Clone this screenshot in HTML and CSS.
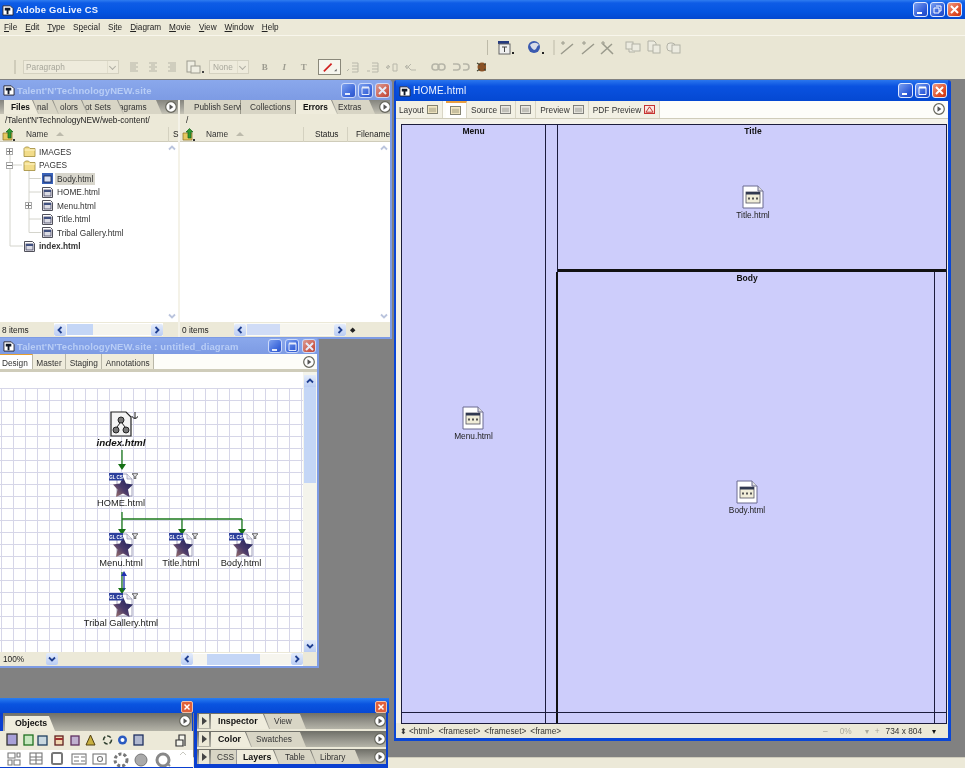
FILE: index.html
```html
<!DOCTYPE html>
<html lang="en">
<head>
<meta charset="utf-8">
<title>Adobe GoLive CS</title>
<link rel="stylesheet" href="styles.css">
</head>
<body>
<svg class="sprite" width="0" height="0">
  <defs>
    <linearGradient id="stargrad" x1="1" y1="0" x2="0" y2="1"><stop offset="0" stop-color="#141c58"/><stop offset=".55" stop-color="#4a3a6a"/><stop offset="1" stop-color="#a87868"/></linearGradient>
    <symbol id="folder" viewBox="0 0 13 11"><path d="M1 2.500 2.500 1h3L7 2.500h5v8H1z" fill="#f2dc8a" stroke="#a08a3a" stroke-width=".8"/><path d="M1.500 4h10.500" stroke="#fff6c8" stroke-width="1"/></symbol>
    <symbol id="doc" viewBox="0 0 11 11"><path d="M.5.5h8l2 2v8H.5z" fill="#fff" stroke="#50505a"/><rect x="2" y="3" width="7" height="6" fill="#dcdce4" stroke="#404060" stroke-width=".8"/><rect x="2" y="3" width="7" height="2" fill="#405080"/></symbol>
    <symbol id="docsel" viewBox="0 0 11 11"><rect width="11" height="11" fill="#3a62b8"/><rect x="2" y="3" width="7" height="6" fill="#d8e0f4" stroke="#102050" stroke-width=".8"/></symbol>
    <symbol id="upfolder" viewBox="0 0 13 13"><path d="M1 5h9v7H1z" fill="#e6c860" stroke="#8a7020" stroke-width=".7"/><path d="M6 10V4H4l3.500-3.500L11 4H9v6z" fill="#2f9a30" stroke="#14601a" stroke-width=".7"/><rect x="11" y="11" width="2" height="2" fill="#333"/></symbol>
    <symbol id="glpage" viewBox="0 0 24 24"><path d="M8 1h10l5 5v17H8z" fill="#fff" stroke="#8888a8" stroke-width=".8"/><path d="M18 1v5h5" fill="#e8e8f0" stroke="#8888a8" stroke-width=".6"/><path d="M14 4 17 10.500 24 11.500 19 16.500 20.500 24 14 20.500 7 24 8.500 16.500 4 11.500 11 10.500z" fill="url(#stargrad)"/><rect y="0" width="14" height="7.500" fill="#2c3f9c"/><text x="7" y="5.800" class="gl-text" text-anchor="middle">GL CS</text></symbol>
    <symbol id="ftp" viewBox="0 0 8 8"><path d="M0 1h8L5 4v4H3V4z" fill="none" stroke="#333" stroke-width="1"/></symbol>
    <symbol id="framedoc" viewBox="0 0 22 24"><path d="M1 1h15l5 5v17H1z" fill="#fff" stroke="#6a6a90"/><path d="M16 1v5h5" fill="#ddd" stroke="#6a6a90"/><rect x="4" y="7" width="14" height="11" fill="#f0edd8" stroke="#505060" stroke-width=".8"/><rect x="4" y="7" width="14" height="2.500" fill="#303850"/><path d="M6 13.500h2M10 13.500h2M14 13.500h2" stroke="#555" stroke-width="2"/></symbol>
    <symbol id="circ" viewBox="0 0 12 12"><circle cx="6" cy="6" r="5.300" fill="#fff" stroke="#66665c" stroke-width="1.200"/><path d="M4.500 3.300 8.300 6 4.500 8.700z" fill="#555"/></symbol>
    <symbol id="ch-l" viewBox="0 0 12 12"><path d="M7.500 3 4.500 6l3 3" fill="none" stroke="#1f3f90" stroke-width="1.800"/></symbol>
    <symbol id="ch-r" viewBox="0 0 12 12"><path d="M4.500 3l3 3-3 3" fill="none" stroke="#1f3f90" stroke-width="1.800"/></symbol>
    <symbol id="ch-u" viewBox="0 0 12 12"><path d="M3 7.500 6 4.500l3 3" fill="none" stroke="#1f3f90" stroke-width="1.800"/></symbol>
    <symbol id="ch-d" viewBox="0 0 12 12"><path d="M3 4.500 6 7.500l3-3" fill="none" stroke="#1f3f90" stroke-width="1.800"/></symbol>
    <symbol id="appicon" viewBox="0 0 13 13"><path d="M1 2h8l3 3v7H1z" fill="#fff" stroke="#223"/><path d="M3 4h6v3H3zM5 7h2v4H5z" fill="#101828"/></symbol>
    <symbol id="tabpic" viewBox="0 0 12 10"><rect x=".5" y=".5" width="11" height="9" fill="#f4e8c4" stroke="#776"/><rect x="2" y="3" width="8" height="5" fill="#c8c0a0"/></symbol>
  </defs>
</svg>

<div class="app">
  <header class="app-title">
    <svg class="ttl-ico"><use href="#appicon"/></svg>
    <span class="app-name">Adobe GoLive CS</span>
    <div class="wctl wctl-app">
      <span class="wbtn"><svg viewBox="0 0 13 13"><rect x="3" y="9" width="5" height="2" fill="#fff"/></svg></span>
      <span class="wbtn"><svg viewBox="0 0 13 13"><path d="M5 3h5v5H8M3 5h5v5H3z" fill="none" stroke="#fff"/></svg></span>
      <span class="wbtn wbtn-x"><svg viewBox="0 0 13 13"><path d="M3 3l7 7M10 3l-7 7" stroke="#fff" stroke-width="2"/></svg></span>
    </div>
  </header>
  <nav class="menubar">
    <span><u>F</u>ile</span><span><u>E</u>dit</span><span><u>T</u>ype</span><span>S<u>p</u>ecial</span><span>S<u>i</u>te</span><span><u>D</u>iagram</span><span><u>M</u>ovie</span><span><u>V</u>iew</span><span><u>W</u>indow</span><span><u>H</u>elp</span>
  </nav>
  <div class="toolbar">
    <div class="tb-row tb-row1">
      <i class="tb-sep"></i>
      <svg class="strip1" viewBox="0 0 195 16" width="195" height="16">
        <g transform="translate(9 0)"><rect x="1" y="1" width="11" height="3" fill="#243a80"/><rect x="2" y="4" width="11" height="10" fill="#f0f0f0" stroke="#666"/><path d="M5 7h5M7.500 7v5" stroke="#444"/><rect x="15" y="12" width="2" height="2" fill="#222"/></g>
        <g transform="translate(39 0)"><circle cx="7" cy="7" r="6" fill="#3a5ab0"/><path d="M3 5c3-3 7-3 9 0-3 1-2 5-5 5-2-1-3-3-4-5z" fill="#d8dce8"/><rect x="15" y="12" width="2" height="2" fill="#222"/></g>
        <path d="M66 0v15" stroke="#bdbaa8"/>
        <g stroke="#9a9a8c" fill="none" stroke-width="1.500"><path d="M73 14 85 4M94 14 106 4M113 14 124 4M115 4l10 10"/><path d="M73 3h4M75 1v4M94 3h4M96 1v4M113 3h4M115 1v4" stroke-width="1"/></g>
        <g stroke="#b2b2a6" fill="#ecebe0"><rect x="138" y="2" width="7" height="7"/><rect x="144" y="4" width="8" height="7"/><path d="M141 9v3h6"/><path d="M160 1h6l2 2v8h-8z"/><rect x="165" y="5" width="7" height="8"/><rect x="179" y="3" width="8" height="8" rx="3"/><rect x="184" y="5" width="8" height="8"/></g>
      </svg>
    </div>
    <div class="tb-row tb-row2">
      <i class="tb-handle"></i>
      <span class="sel sel-para">Paragraph<b class="sel-ar"></b></span>
      <svg class="strip2" viewBox="0 0 90 16" width="90" height="16">
        <g stroke="#b6b5a8"><path d="M11 4h8M11 6h6M11 8h8M11 10h6M11 12h8"/><path d="M30 4h8M32 6h4M30 8h8M32 10h4M30 12h8"/><path d="M49 4h8M51 6h6M49 8h8M51 10h6M49 12h8"/></g>
        <g stroke="#9d9c90" fill="#efeee2"><rect x="68" y="2" width="8" height="11"/><rect x="72" y="7" width="9" height="7"/></g><rect x="83" y="12" width="2" height="2" fill="#444"/>
      </svg>
      <span class="sel sel-none">None<b class="sel-ar"></b></span>
      <span class="fmt fmt-b">B</span><span class="fmt fmt-i">I</span><span class="fmt">T</span>
      <span class="colorbox"><svg viewBox="0 0 22 14" width="20" height="12"><path d="M5 12 14 3" stroke="#d02020" stroke-width="2"/><path d="M17 12h3V9z" fill="#666"/></svg></span>
      <svg class="strip3" viewBox="0 0 145 16" width="145" height="16">
        <g stroke="#b8b7aa" fill="none"><path d="M6 12l2-2M11 4h6v9h-6M11 7h6M11 10h6M26 12h3M31 4h6v9h-6M31 7h6M31 10h6M45 8h4l-2-2v4zM52 5h4v7h-4zM66 8h-2l2-2v4zM70 5l-3 3 3 3h5"/></g>
        <g fill="none" stroke="#b6b5a8" stroke-width="1.600"><rect x="91" y="5" width="7" height="6" rx="3"/><rect x="97" y="5" width="7" height="6" rx="3"/><path d="M112 5h4a3 3 0 0 1 0 6h-4M122 5h3a3 3 0 0 1 0 6h-3"/></g>
        <circle cx="141" cy="8" r="4.500" fill="#8a5226"/><path d="M136 4l3 2M146 4l-3 2M136 12l3-2M146 12l-3-2" stroke="#443" stroke-width="1.200"/>
      </svg>
    </div>
  </div>

  <main class="desktop">
    <!-- Site window -->
    <section class="win win-faded win-site">
      <div class="wtitle wtitle-faded">
        <svg class="ttl-ico"><use href="#appicon"/></svg>
        <span class="wname">Talent'N'TechnologyNEW.site</span>
        <div class="wctl wctl-faded">
          <span class="wbtn"><svg viewBox="0 0 13 13"><rect x="3" y="9" width="5" height="2" fill="#fff"/></svg></span>
          <span class="wbtn"><svg viewBox="0 0 13 13"><path d="M3 3.500h7v7H3z" fill="none" stroke="#fff"/><path d="M3 3.500h7" stroke="#fff" stroke-width="2"/></svg></span>
          <span class="wbtn wbtn-x"><svg viewBox="0 0 13 13"><path d="M3 3l7 7M10 3l-7 7" stroke="#fff" stroke-width="2"/></svg></span>
        </div>
      </div>
      <div class="panes">
        <div class="pane pane-l">
          <div class="tabbar">
            <span class="tab tab-on t-files">Files</span><span class="tab t-nal">nal</span><span class="tab t-col">olors</span><span class="tab t-sets">ot Sets</span><span class="tab t-gr">agrams</span>
            <svg class="circ"><use href="#circ"/></svg>
          </div>
          <div class="path">/Talent'N'TechnologyNEW/web-content/</div>
          <div class="thead">
            <svg class="upf"><use href="#upfolder"/></svg><span class="th-name">Name</span><i class="sort"></i><i class="th-grow"></i><span class="th-s">S</span>
          </div>
          <div class="tlist">
            <ul class="tree">
              <li class="r0"><b class="plus"></b><svg class="fold"><use href="#folder"/></svg>IMAGES</li>
              <li class="r0"><b class="plus minus"></b><svg class="fold"><use href="#folder"/></svg>PAGES</li>
              <li class="r1"><svg class="dico"><use href="#docsel"/></svg><span class="selname">Body.html</span></li>
              <li class="r1"><svg class="dico"><use href="#doc"/></svg>HOME.html</li>
              <li class="r1"><b class="plus plus-in"></b><svg class="dico"><use href="#doc"/></svg>Menu.html</li>
              <li class="r1"><svg class="dico"><use href="#doc"/></svg>Title.html</li>
              <li class="r1"><svg class="dico"><use href="#doc"/></svg>Tribal Gallery.html</li>
              <li class="r0 rbold"><svg class="dico dico0"><use href="#doc"/></svg>index.html</li>
            </ul>
            <svg class="treelines" width="60" height="110"><path d="M10 4v95h13M29 18v67.500M29 31.500h12M29 45h12M29 58.500h-1M29 72h12M29 85.500h12M10 18h12" stroke="#d4d4cc" fill="none"/></svg>
            <div class="vsb vsb-fade"><svg><use href="#ch-u"/></svg><i></i><svg><use href="#ch-d"/></svg></div>
          </div>
          <div class="status">
            <span class="st-t">8 items</span>
            <div class="hsb hsb-l"><span class="sbtn"><svg><use href="#ch-l"/></svg></span><i class="track"><b class="thumb th-1"></b></i><span class="sbtn"><svg><use href="#ch-r"/></svg></span></div>
          </div>
        </div>
        <div class="pane pane-r">
          <div class="tabbar">
            <span class="tab tab-sq t-pub">Publish Servi</span><span class="tab tab-sq t-coll">Collections</span><span class="tab tab-on t-err">Errors</span><span class="tab t-ext">Extras</span>
            <svg class="circ"><use href="#circ"/></svg>
          </div>
          <div class="path path-r">/</div>
          <div class="thead">
            <svg class="upf"><use href="#upfolder"/></svg><span class="th-name">Name</span><i class="sort"></i><i class="th-grow"></i><span class="th-c th-status">Status</span><span class="th-c th-file">Filename</span>
          </div>
          <div class="tlist">
            <div class="vsb vsb-fade vsb-end"><svg><use href="#ch-u"/></svg><i></i><svg><use href="#ch-d"/></svg></div>
          </div>
          <div class="status">
            <span class="st-t">0 items</span>
            <div class="hsb hsb-r"><span class="sbtn"><svg><use href="#ch-l"/></svg></span><i class="track"><b class="thumb th-2"></b></i><span class="sbtn"><svg><use href="#ch-r"/></svg></span><span class="st-mini">◆</span></div>
          </div>
        </div>
      </div>
    </section>

    <!-- Diagram window -->
    <section class="win win-faded win-diagram">
      <div class="wtitle wtitle-faded wtitle-d">
        <svg class="ttl-ico"><use href="#appicon"/></svg>
        <span class="wname">Talent'N'TechnologyNEW.site : untitled_diagram</span>
        <div class="wctl wctl-faded wctl-d">
          <span class="wbtn"><svg viewBox="0 0 13 13"><rect x="3" y="9" width="5" height="2" fill="#fff"/></svg></span>
          <span class="wbtn"><svg viewBox="0 0 13 13"><path d="M3 3.500h7v7H3z" fill="none" stroke="#fff"/><path d="M3 3.500h7" stroke="#fff" stroke-width="2"/></svg></span>
          <span class="wbtn wbtn-x"><svg viewBox="0 0 13 13"><path d="M3 3l7 7M10 3l-7 7" stroke="#fff" stroke-width="2"/></svg></span>
        </div>
      </div>
      <div class="dtabs">
        <span class="dtab dtab-on">Design</span><span class="dtab">Master</span><span class="dtab">Staging</span><span class="dtab">Annotations</span>
        <svg class="circ circ-d"><use href="#circ"/></svg>
      </div>
      <div class="dbody">
        <div class="canvas">
          <div class="grid"></div>
          <svg class="links" width="303" height="280" viewBox="0 0 303 280">
            <g stroke="#1c7a1c" stroke-width="1.300" fill="none"><path d="M122 78v16M122 140v20M122 147h120M182 147v12M242 147v12M122 200v20"/></g>
            <g fill="#157015"><path d="M118 92h8l-4 6zM118 157h8l-4 6zM178 157h8l-4 6zM238 157h8l-4 6zM118 216h8l-4 6z"/></g>
            <path d="M124 204v14" stroke="#2030b0" stroke-width="1.300"/><path d="M121 204h6l-3-5z" fill="#2030b0"/>
          </svg>
          <div class="node n-index"><span class="n-ico"><svg class="idx-ico" viewBox="0 0 28 26" width="28" height="26"><path d="M1 1h15l5 5v19H1z" fill="#f4f4f4" stroke="#222" stroke-width="1.200"/><circle cx="11" cy="9" r="3" fill="#777" stroke="#222"/><circle cx="6" cy="19" r="3" fill="#777" stroke="#222"/><circle cx="16" cy="19" r="3" fill="#777" stroke="#222"/><path d="M10 12 7 16M12 12l3 4" stroke="#222"/><path d="M25 1v7M22 5c0 3 6 3 6 0" stroke="#222" fill="none"/></svg></span><span class="n-lab n-lab-i">index.html</span></div>
          <div class="node n-home"><span class="n-ico"><svg class="gl"><use href="#glpage"/></svg><svg class="ft"><use href="#ftp"/></svg></span><span class="n-lab">HOME.html</span></div>
          <div class="node n-menu"><span class="n-ico"><svg class="gl"><use href="#glpage"/></svg><svg class="ft"><use href="#ftp"/></svg></span><span class="n-lab">Menu.html</span></div>
          <div class="node n-title"><span class="n-ico"><svg class="gl"><use href="#glpage"/></svg><svg class="ft"><use href="#ftp"/></svg></span><span class="n-lab">Title.html</span></div>
          <div class="node n-body"><span class="n-ico"><svg class="gl"><use href="#glpage"/></svg><svg class="ft"><use href="#ftp"/></svg></span><span class="n-lab">Body.html</span></div>
          <div class="node n-tribal"><span class="n-ico"><svg class="gl"><use href="#glpage"/></svg><svg class="ft"><use href="#ftp"/></svg></span><span class="n-lab">Tribal Gallery.html</span></div>
        </div>
        <div class="vsb vsb-live"><svg><use href="#ch-u"/></svg><i><b></b></i><svg><use href="#ch-d"/></svg></div>
      </div>
      <div class="dstatus">
        <span class="zoomv">100%</span>
        <span class="sbtn sbtn-z"><svg><use href="#ch-d"/></svg></span>
        <i class="dstatus-fill"></i>
        <div class="hsb hsb-d"><span class="sbtn"><svg><use href="#ch-l"/></svg></span><i class="track"><b class="thumb th-3"></b></i><span class="sbtn"><svg><use href="#ch-r"/></svg></span></div>
      </div>
    </section>

    <!-- HOME window -->
    <section class="win win-home">
      <div class="wtitle wtitle-home">
        <svg class="ttl-ico"><use href="#appicon"/></svg>
        <span class="wname wname-home">HOME.html</span>
        <div class="wctl wctl-home">
          <span class="wbtn"><svg viewBox="0 0 13 13"><rect x="3" y="9" width="5" height="2" fill="#fff"/></svg></span>
          <span class="wbtn"><svg viewBox="0 0 13 13"><path d="M3 3.500h7v7H3z" fill="none" stroke="#fff"/><path d="M3 3.500h7" stroke="#fff" stroke-width="2"/></svg></span>
          <span class="wbtn wbtn-x"><svg viewBox="0 0 13 13"><path d="M3 3l7 7M10 3l-7 7" stroke="#fff" stroke-width="2"/></svg></span>
        </div>
      </div>
      <div class="htabs">
        <span class="htab htab-first">Layout<svg class="tp"><use href="#tabpic"/></svg></span>
        <span class="htab htab-on"><svg class="tp"><use href="#tabpic"/></svg></span>
        <span class="htab">Source<svg class="tp tp-g"><use href="#tabpic"/></svg></span>
        <span class="htab"><svg class="tp tp-g"><use href="#tabpic"/></svg></span>
        <span class="htab">Preview<svg class="tp tp-g"><use href="#tabpic"/></svg></span>
        <span class="htab">PDF Preview<svg class="tp tp-red" viewBox="0 0 12 10"><rect x=".5" y=".5" width="11" height="9" fill="#fbe8e0" stroke="#c02020"/><path d="M2 8 6 2l4 6z" fill="none" stroke="#c02020"/></svg></span>
        <svg class="circ circ-h"><use href="#circ"/></svg>
      </div>
      <div class="hbody">
        <div class="fs">
          <div class="fr fr-menu">
            <div class="fr-name">Menu</div>
            <div class="fitem fi-menu"><svg class="fdoc"><use href="#framedoc"/></svg><span>Menu.html</span></div>
          </div>
          <div class="gutter"></div>
          <div class="fs-right">
            <div class="fr fr-title">
              <div class="fr-name">Title</div>
              <div class="fitem fi-title"><svg class="fdoc"><use href="#framedoc"/></svg><span>Title.html</span></div>
            </div>
            <div class="fs-body">
              <div class="fr fr-body">
                <div class="fr-name">Body</div>
                <div class="fitem fi-body"><svg class="fdoc"><use href="#framedoc"/></svg><span>Body.html</span></div>
              </div>
              <div class="gutter-r"></div>
            </div>
          </div>
          <i class="fs-hline"></i>
        </div>
      </div>
      <div class="hstatus">
        <span class="crumb-ico">⬍</span>
        <span class="crumbs">&lt;html&gt;</span><span class="crumbs">&lt;frameset&gt;</span><span class="crumbs">&lt;frameset&gt;</span><span class="crumbs">&lt;frame&gt;</span>
        <i class="hs-grow"></i>
        <span class="hs-dim hs-a">–</span><span class="hs-dim hs-b">0%</span><span class="hs-dim hs-c">▾</span><span class="hs-dim hs-d">+</span>
        <span class="hs-size">734 x 804</span><span class="hs-ar">▾</span>
      </div>
    </section>

    <!-- Objects palette -->
    <section class="pal pal-obj">
      <div class="ptitle"><span class="pclose"><svg viewBox="0 0 12 12"><path d="M3 3l6 6M9 3l-6 6" stroke="#fff" stroke-width="1.800"/></svg></span></div>
      <div class="ptabs ptabs-obj"><span class="ptab ptab-on pt-obj">Objects</span><svg class="circ circ-p"><use href="#circ"/></svg></div>
      <div class="obj-row1">
        <svg viewBox="0 0 192 19" width="192" height="19">
          <rect x="7" y="3" width="10" height="11" fill="#a8a0d8" stroke="#333" stroke-width="1.300"/>
          <rect x="24" y="4" width="9" height="10" fill="#c8e8c0" stroke="#207020" stroke-width="1.300"/>
          <rect x="38" y="5" width="9" height="9" fill="#c8d8e0" stroke="#204060" stroke-width="1.300"/>
          <rect x="55" y="5" width="8" height="9" fill="#f0d8b0" stroke="#602020" stroke-width="1.300"/><path d="M55 8h8" stroke="#a03030" stroke-width="2"/>
          <rect x="71" y="5" width="8" height="9" fill="#c0b0d0" stroke="#603060" stroke-width="1.300"/>
          <path d="M90.500 4 86 14h9z" fill="#c8b040" stroke="#504010"/>
          <circle cx="107.500" cy="9" r="4" fill="none" stroke="#304030" stroke-width="1.600" stroke-dasharray="4 2"/>
          <circle cx="122.500" cy="9" r="4.500" fill="#2a5ac0"/><circle cx="122.500" cy="9" r="2" fill="#fff"/>
          <rect x="134" y="4" width="9" height="10" fill="#b0b8d0" stroke="#203060" stroke-width="1.300"/>
          <path d="M176 9h7v6h-7zM179 9V4h6v11" fill="#f4f4ec" stroke="#333" stroke-width="1.200"/>
        </svg>
      </div>
      <div class="obj-row2">
        <svg viewBox="0 0 192 17" width="192" height="17">
          <g fill="none" stroke="#777" stroke-width="1.100"><path d="M8 3h7v5H8zM8 10h4v5H8zM17 3h3v4h-3zM14 10h6v5h-6z"/><rect x="30" y="3" width="12" height="11"/><path d="M30 7h12M30 10h12M36 3v11"/><rect x="52" y="3" width="10" height="11" rx="1.500" stroke-width="2"/><rect x="72" y="4" width="14" height="10"/><path d="M74 7h5M81 7h4M74 11h5M81 11h4"/><rect x="93" y="4" width="13" height="10"/><circle cx="100" cy="9" r="2.500"/></g>
          <circle cx="121" cy="10" r="6" fill="none" stroke="#777" stroke-width="3" stroke-dasharray="3 2"/>
          <circle cx="141" cy="10" r="6" fill="#aaa" stroke="#777"/>
          <circle cx="163" cy="10" r="6" fill="none" stroke="#888" stroke-width="3"/><path d="M167 13l3 3" stroke="#888" stroke-width="2"/>
          <path d="M180 5l3-3 3 3" fill="none" stroke="#c8c8c0"/>
        </svg>
      </div>
    </section>

    <!-- Inspector palette -->
    <section class="pal pal-insp">
      <div class="ptitle"><span class="pclose"><svg viewBox="0 0 12 12"><path d="M3 3l6 6M9 3l-6 6" stroke="#fff" stroke-width="1.800"/></svg></span></div>
      <div class="ptabs ptabs-i"><b class="ptri"></b><span class="ptab ptab-on pt-a">Inspector</span><span class="ptab pt-b">View</span><svg class="circ circ-p"><use href="#circ"/></svg></div>
      <div class="ptabs ptabs-i"><b class="ptri"></b><span class="ptab ptab-on pt-c">Color</span><span class="ptab pt-d">Swatches</span><svg class="circ circ-p"><use href="#circ"/></svg></div>
      <div class="ptabs ptabs-i"><b class="ptri"></b><span class="ptab ptab-sq pt-e">CSS</span><span class="ptab ptab-on pt-f">Layers</span><span class="ptab pt-g">Table</span><span class="ptab pt-h">Library</span><svg class="circ circ-p"><use href="#circ"/></svg></div>
    </section>
  </main>
  <div class="foot"></div>
</div>
</body>
</html>
```

FILE: styles.css
```css
* { box-sizing: border-box; }
html, body { margin: 0; padding: 0; background: #fff; }
body { font: 8.3px "Liberation Sans", Arial, sans-serif; color: #222; overflow: hidden; }
.sprite { position: absolute; }
.gl-text { font: bold 4.5px "Liberation Sans", sans-serif; fill: #fff; }
i, b { display: block; font-style: normal; }
.app { width: 965px; height: 768px; display: flex; flex-direction: column; overflow: hidden; position: relative; background: #ece9d8; filter: blur(.3px); }

.app-title { height: 19px; display: flex; align-items: center; padding-left: 2px; background: linear-gradient(#2f7cf0 0, #0e5ce6 3px, #0454e0 12px, #0448d0 100%); flex: none; }
.ttl-ico { width: 12px; height: 12px; margin-right: 2px; flex: none; }
.app-name { font-size: 9.4px; font-weight: bold; color: #eef2ff; letter-spacing: .2px; }
.wctl { margin-left: auto; display: flex; gap: 2px; }
.wctl-app { margin-right: 3px; }
.wbtn { width: 15px; height: 15px; border: 1px solid #dfe8ff; border-radius: 3px; background: linear-gradient(135deg, #7ba0f0, #2a58d8 70%, #2048c0); display: block; }
.wbtn svg { width: 13px; height: 13px; display: block; }
.wbtn-x { background: linear-gradient(135deg, #f09a80, #de4a24 70%, #c83010); }

.menubar { height: 17px; display: flex; align-items: center; gap: 8px; padding-left: 4px; background: #ece9d8; font-size: 8.2px; color: #222; flex: none; border-bottom: 1px solid #f8f6ec; }
.menubar u { text-decoration: underline; }

.toolbar { height: 43px; flex: none; background: #e9e6d4; }
.tb-row { display: flex; align-items: center; }
.tb-row1 { height: 20px; padding-left: 487px; padding-top: 3px; }
.tb-sep { width: 1px; height: 15px; background: #bdbaa8; }
.tb-row2 { height: 22px; padding-left: 14px; }
.tb-handle { width: 2px; height: 14px; background: #cfccba; margin-right: 7px; }
.sel { display: flex; align-items: center; height: 14px; padding-left: 2px; background: #eeebdc; border: 1px solid #d4d1c0; color: #a8a79c; font-size: 8.3px; position: relative; }
.sel-para { width: 96px; }
.sel-none { width: 40px; padding-left: 3px; }
.sel-ar { margin-left: auto; width: 11px; height: 12px; border-left: 1px solid #e0ddcc; position: relative; }
.sel-ar::after { content: ""; position: absolute; left: 2px; top: 3px; width: 4px; height: 4px; border: solid #b0afa4; border-width: 0 1px 1px 0; transform: rotate(45deg); }
.fmt { width: 19.500px; text-align: center; font: bold 9px "Liberation Serif", serif; color: #9d9c90; }
.fmt-b { margin-left: 6px; }
.fmt-i { font-style: italic; }
.colorbox { width: 23px; height: 16px; background: #f6f5ee; border: 1px solid #8a887a; margin-left: 4px; display: flex; align-items: center; justify-content: center; }

.desktop { flex: 1; position: relative; background: #818181; }
.foot { height: 11px; flex: none; background: #ece9d8; border-top: 1px solid #cfccbc; }

.win { position: absolute; display: flex; flex-direction: column; border-style: solid; border-radius: 3px 3px 0 0; }
.win-faded { border-color: #7d9be4; background: #ece9d8; }
.win-site { left: 0; top: 1px; width: 392px; height: 259px; border-width: 0 2px 2px 0; }
.win-diagram { left: 0; top: 259px; width: 319px; height: 330px; border-width: 0 2px 2px 0; }
.win-home { left: 394px; top: 1px; width: 557px; height: 661px; border-width: 0 3px 3px 2px; border-color: #0a46d6; background: #ece9d8; }

.wtitle { display: flex; align-items: center; flex: none; padding-left: 3px; }
.wtitle-faded { height: 20px; background: linear-gradient(#8aa8ec, #7d9be4); }
.wtitle-d { height: 16px; }
.wtitle-home { height: 21px; background: linear-gradient(#2a76ee, #0a52e0 30%, #0448d2); }
.wname { font-size: 9.5px; font-weight: bold; color: #b8cdf6; letter-spacing: .1px; }
.wname-home { color: #f0f4ff; font-weight: normal; font-size: 10px; letter-spacing: .2px; }
.wctl-faded { margin-right: 0; gap: 2px; }
.wctl-faded .wbtn { opacity: .8; }
.wctl-d .wbtn { width: 14px; height: 14px; }
.wctl-d { gap: 3px; margin-right: 1px; }
.wctl-home { margin-right: 1px; gap: 2px; }

.panes { flex: 1; display: flex; gap: 2px; background: #f4f2e8; min-height: 0; }
.pane { display: flex; flex-direction: column; min-width: 0; background: #ece9d8; }
.pane-l { width: 178px; }
.pane-r { flex: 1; }
.tabbar { height: 14px; flex: none; display: flex; align-items: stretch; position: relative; background: linear-gradient(#85857e, #a8a79e 60%, #c6c4b6); padding-left: 4px; overflow: hidden; }
.tab { background: #d8d5c5; color: #333; font-size: 8.3px; line-height: 14px; padding-right: 0; clip-path: polygon(0 0, calc(100% - 6px) 0, 100% 100%, 6px 100%); margin-right: -5px; white-space: nowrap; flex: none; position: relative; }
.tab-on { background: #efecdc; font-weight: bold; color: #111; clip-path: polygon(0 0, calc(100% - 6px) 0, 100% 100%, 0 100%); }
.tab-sq { clip-path: none; margin-right: 0; border-right: 1px solid #9a988a; }
.t-files { width: 34px; padding-left: 7px; }
.t-nal { width: 25px; padding-left: 4px; }
.t-col { width: 34px; padding-left: 7px; }
.t-sets { width: 41px; padding-left: 3px; }
.t-gr { width: 44px; padding-left: 1px; }
.t-pub { width: 57px; padding-left: 10px; letter-spacing: -.05px; }
.t-coll { width: 55px; padding-left: 9px; }
.t-err { width: 41px; padding-left: 7px; }
.t-ext { width: 43px; padding-left: 6px; }
.circ { width: 12px; height: 12px; position: absolute; right: 1px; top: 1px; }
.pane-r .circ { right: -1px; }
.path { height: 13px; flex: none; line-height: 13px; padding-left: 5px; font-size: 8.3px; color: #222; }
.path-r { padding-left: 6px; }
.thead { height: 15px; flex: none; display: flex; align-items: center; border-bottom: 1px solid #cfccba; background: #ece9d8; position: relative; }
.upf { width: 13px; height: 13px; margin-left: 2px; }
.th-name { margin-left: 11px; color: #333; }
.sort { margin-left: 8px; width: 0; height: 0; border: 4px solid transparent; border-top: 0; border-bottom: 4px solid #bdbbac; }
.th-grow { flex: 1; }
.th-s { width: 10px; border-left: 1px solid #d4d1c0; padding-left: 4px; height: 15px; line-height: 15px; }
.th-c { height: 15px; line-height: 15px; border-left: 1px solid #d4d1c0; white-space: nowrap; }
.th-status { width: 44px; padding-left: 11px; }
.th-file { width: 43px; padding-left: 8px; }

.tlist { flex: 1; background: #fff; position: relative; min-height: 0; display: flex; }
.tree { list-style: none; margin: 0; padding: 3px 0 0 0; flex: 1; position: relative; z-index: 1; }
.tree li { height: 13.500px; display: flex; align-items: center; color: #333; position: relative; }
.r0 { padding-left: 23px; }
.r1 { padding-left: 42px; }
.rbold { font-weight: bold; color: #111; }
.fold { width: 13px; height: 11px; margin-right: 3px; }
.dico { width: 11px; height: 11px; margin-right: 4px; flex: none; }
.dico0 { margin-right: 4px; margin-left: 1px; }
.selname { background: #d8d6cc; padding: 1px 2px; margin-left: -2px; }
.plus { position: absolute; left: 6px; top: 3px; width: 7px; height: 7px; border: 1px solid #aaa; background: #fff linear-gradient(#777, #777) center / 5px 1px no-repeat; }
.plus:not(.minus)::after { content: ""; position: absolute; left: 2px; top: 0; width: 1px; height: 5px; background: #777; }
.plus-in { left: 25px; }
.treelines { position: absolute; left: 0; top: 5px; }
.vsb { display: flex; flex-direction: column; width: 12px; flex: none; background: #fff; }
.vsb svg { width: 12px; height: 12px; flex: none; }
.vsb i { flex: 1; }
.vsb-fade { opacity: .3; }
.vsb-end { margin-left: auto; }
.status { height: 15px; flex: none; display: flex; align-items: center; background: #ece9d8; }
.st-t { padding-left: 2px; width: 54px; flex: none; }
.hsb { display: flex; align-items: center; height: 13px; background: #fff; }
.hsb-l { width: 109px; }
.hsb-r { width: 124px; background: #fbfbf6; }
.track { flex: 1; display: block; height: 11px; background: #f6f5ee; }
.thumb { height: 11px; background: #c4d6f6; }
.th-1 { width: 26px; margin-left: 1px; }
.th-2 { width: 33px; margin-left: 1px; background: #d0dcf6; }
.th-3 { width: 53px; margin-left: 14px; }
.sbtn { width: 12px; height: 12px; flex: none; display: block; background: linear-gradient(#e4ecfb, #bacdf4); border-radius: 2px; }
.sbtn svg { width: 12px; height: 12px; display: block; }
.st-mini { width: 12px; font-size: 7px; text-align: center; background: #ece9d8; height: 13px; line-height: 13px; }

.dtabs { height: 18px; flex: none; display: flex; position: relative; background: #fdfdf9; border-bottom: 3px solid #cfccba; }
.dtab { height: 15px; line-height: 18px; padding: 0 3.500px; border-right: 1px solid #b9b7a8; color: #333; background: #efecdc; }
.dtab-on { background: #fff; padding: 0 4px 0 2px; border-top: 1px solid #e8a030; line-height: 16px; }
.circ-d { top: 2px; right: 2px; }
.dbody { flex: 1; display: flex; background: #fff; min-height: 0; }
.canvas { flex: 1; position: relative; display: flex; flex-direction: column; padding-top: 16px; overflow: hidden; background: #fff; }
.grid { flex: 1; background-image: linear-gradient(to right, #d6d6e8 1px, transparent 1px), linear-gradient(to bottom, #d6d6e8 1px, transparent 1px); background-size: 12px 12px; background-position: 1px 0; }
.links { position: absolute; left: 0; top: 0; }
.node { position: absolute; width: 90px; display: flex; flex-direction: column; align-items: center; }
.n-ico { position: relative; display: block; height: 24px; }
.gl { width: 24px; height: 24px; display: block; }
.ft { position: absolute; left: 23px; top: 0; width: 6px; height: 6px; }
.idx-ico { display: block; margin-left: 6px; }
.n-lab { font-size: 9.300px; color: #222; margin-top: 1px; line-height: 11px; white-space: nowrap; }
.n-lab-i { font-size: 9.800px; font-weight: bold; font-style: italic; margin-top: 2px; color: #111; }
.n-index { left: 76px; top: 39px; }
.n-home { left: 76px; top: 101px; }
.n-menu { left: 76px; top: 161px; }
.n-title { left: 136px; top: 161px; }
.n-body { left: 196px; top: 161px; }
.n-tribal { left: 76px; top: 221px; }
.vsb-live { width: 14px; padding: 3px 1px 0; background: #f4f4ec; }
.vsb-live svg { background: linear-gradient(#e4ecfb, #bacdf4); }
.vsb-live i { display: block; }
.vsb-live b { height: 96px; background: #c4d6f6; }
.dstatus { height: 14px; flex: none; display: flex; align-items: center; background: #ece9d8; }
.zoomv { width: 46px; padding-left: 3px; font-size: 8.3px; }
.dstatus-fill { flex: 1; }
.hsb-d { width: 122px; margin-right: 14px; }

.htabs { height: 18px; flex: none; display: flex; align-items: stretch; position: relative; background: #fdfdf9; border-bottom: 1px solid #cfccba; }
.htab { display: flex; align-items: center; gap: 3px; padding: 0 4px; border-right: 1px solid #d9d6c6; color: #333; background: #f2f0e4; font-size: 8.3px; }
.htab-first { padding: 0 4px 0 3px; }
.htab-on { background: #fff; border-top: 2px solid #eaa040; padding: 0 4.500px; margin-left: 3px; }
.tp { width: 11px; height: 9px; flex: none; }
.tp-g { filter: saturate(.2); }
.circ-h { top: 2px; right: 3px; }
.hbody { flex: 1; background: #f4f2ea; padding: 5px 0 0 5px; min-height: 0; }
.fs { position: relative; height: 600px; width: 546px; display: flex; background: #cdcdfb; border: 1px solid #1c1c3c; }
.fr { display: flex; flex-direction: column; align-items: center; }
.fr-name { font-weight: bold; font-size: 8.5px; color: #111; line-height: 13px; }
.fr-menu { width: 144px; border-right: 1px solid #1c1c3c; }
.gutter { width: 11px; flex: none; }
.fs-right { flex: 1; display: flex; flex-direction: column; border-left: 1px solid #1c1c3c; min-width: 0; }
.fr-title { height: 147px; border-bottom: 3px solid #111; flex: none; padding-left: 2px; }
.fs-body { flex: 1; display: flex; border-left: 2px solid #111; margin-left: -2px; }
.fr-body { flex: 1; padding-left: 2px; }
.gutter-r { width: 12px; border-left: 1px solid #1c1c3c; }
.fs-hline { position: absolute; left: 0; right: 0; top: 587px; height: 1px; background: #1c1c3c; }
.fitem { display: flex; flex-direction: column; align-items: center; font-size: 8.3px; color: #222; }
.fdoc { width: 22px; height: 24px; display: block; }
.fitem span { margin-top: 1px; line-height: 10px; }
.fi-menu { margin-top: 268px; }
.fi-title { margin-top: 47px; }
.fi-body { margin-top: 195px; }
.hstatus { height: 15px; flex: none; display: flex; align-items: center; padding: 1px 0 0 4px; background: #ece9d8; color: #333; font-size: 8.3px; }
.crumb-ico { width: 9px; font-size: 8px; }
.crumbs { margin-right: 4px; }
.hs-grow { flex: 1; }
.hs-dim { color: #a9a89c; }
.hs-a { margin-right: 12px; }
.hs-b { margin-right: 13px; }
.hs-c { margin-right: 6px; }
.hs-d { margin-right: 6px; }
.hs-size { margin-right: 10px; }
.hs-ar { margin-right: 12px; color: #111; }

.pal { position: absolute; top: 619px; height: 70px; display: flex; flex-direction: column; background: #0a3fd0; }
.pal-obj { left: 0; width: 193px; padding: 0 1px 0 3px; }
.pal-insp { left: 194px; width: 194px; padding: 0 2px 4px 3px; }
.ptitle { height: 15px; flex: none; position: relative; background: linear-gradient(#2a7ef0, #0a54e0 40%, #0648d4); margin: 0 -3px; display: flex; justify-content: flex-end; padding: 3px 2px 0 0; }
.pclose { width: 12px; height: 12px; border-radius: 2px; background: #e0603a; border: 1px solid #f0c0a8; display: block; }
.pclose svg { display: block; width: 10px; height: 10px; }
.ptabs { flex: none; display: flex; position: relative; overflow: hidden; background: linear-gradient(#6f6f68, #9a9990 60%, #b5b4a8); }
.ptabs-obj { height: 18px; padding: 3px 0 0 2px; }
.ptabs-i { padding: 1px 0 0 2px; border-bottom: 2px solid #ece9d8; height: 18px; }
.ptabs-i:last-child { height: 15px; border: 0; }
.ptab { height: 15px; line-height: 14px; background: #d8d5c5; padding-right: 0; clip-path: polygon(0 0, calc(100% - 6px) 0, 100% 100%, 6px 100%); margin-right: -5px; font-size: 8.3px; color: #333; position: relative; flex: none; }
.ptab-on { background: #efecdc; font-weight: bold; color: #111; font-size: 8.8px; clip-path: polygon(0 0, calc(100% - 6px) 0, 100% 100%, 0 100%); }
.ptab-sq { clip-path: none; margin-right: 0; border-right: 1px solid #999; }
.pt-obj { width: 50px; padding-left: 10px; }
.pt-a { width: 58px; padding-left: 7px; }
.pt-b { width: 42px; padding-left: 10px; }
.pt-c { width: 40px; padding-left: 7px; }
.pt-d { width: 60px; padding-left: 10px; }
.pt-e { width: 26px; padding-left: 6px; }
.pt-f { width: 42px; padding-left: 6px; }
.pt-g { width: 42px; padding-left: 11px; }
.pt-h { width: 50px; padding-left: 9px; }
.ptri { width: 10px; height: 14px; flex: none; margin-right: 2px; background: #ece9d8; position: relative; }
.ptri::after { content: ""; position: absolute; left: 3px; top: 3px; border: 4px solid transparent; border-left: 5px solid #444; border-right: 0; }
.circ-p { top: 2px; right: 1px; }
.pal-insp .circ-p { right: 0; }
.obj-row1 { height: 19px; flex: none; margin: 0 -1px 0 -3px; background: #ece9d8; overflow: hidden; }
.obj-row2 { height: 17px; flex: none; margin: 0 -1px 0 -3px; background: #fff; overflow: hidden; }
.obj-row1 svg, .obj-row2 svg { display: block; }
```
